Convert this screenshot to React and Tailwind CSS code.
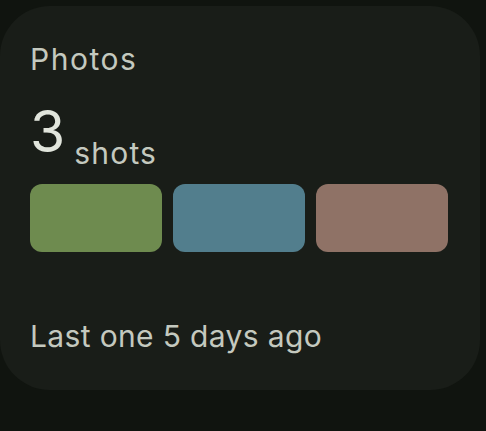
export default function App() {
  const swatches = ['bg-[#6e8b4f]', 'bg-[#527e8d]', 'bg-[#8f7266]'];

  return (
    <div className="min-h-[431px] w-full bg-[#10140f] pt-[6px]" style={{ fontFamily: 'Inter, "Noto Sans", sans-serif' }}>
      <div className="w-[480px] h-[384px] rounded-[50px] bg-[#191d18] pl-[30px] pr-[32px] pt-[35px]">
        <div className="text-[30px] leading-[36px] tracking-[1.5px] text-[#c4c9bf]">Photos</div>

        <div className="mt-[26px] flex items-start">
          <span className="text-[57px] leading-[57px] text-[#e1e5dc]">3</span>
          <span className="ml-[9px] mt-[35px] text-[30px] leading-[30px] tracking-[1.2px] text-[#c4c9bf]">shots</span>
        </div>

        <div className="mt-[16px] grid grid-cols-3 gap-[11px]">
          {swatches.map((c) => (
            <div key={c} className={`h-[68px] rounded-[12px] ${c}`} />
          ))}
        </div>

        <div className="mt-[66px] text-[30px] leading-[36px] tracking-[0.35px] text-[#c4c9bf]">Last one 5 days ago</div>
      </div>
    </div>
  );
}
